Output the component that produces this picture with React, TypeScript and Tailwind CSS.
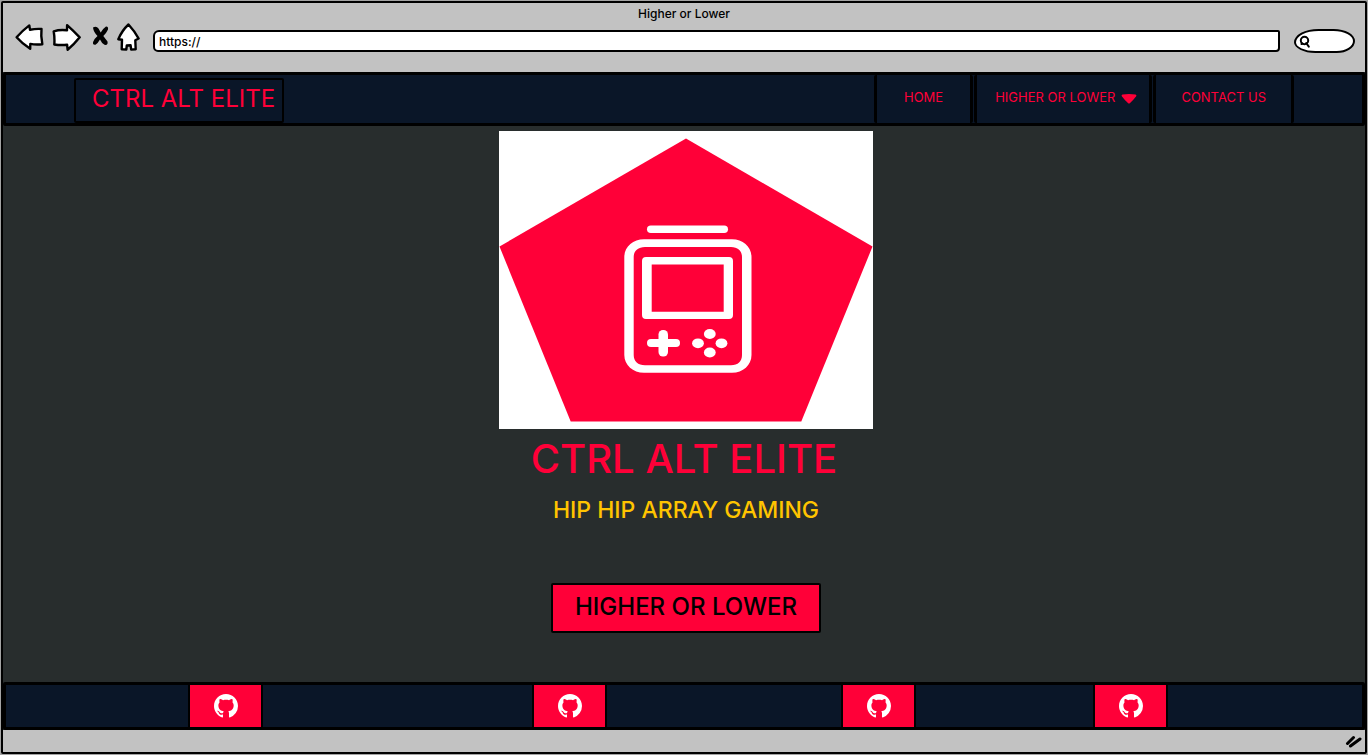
const members = [
  { name: "First team member", column: "col-start-2" },
  { name: "Second team member", column: "col-start-4" },
  { name: "Third team member", column: "col-start-6" },
  { name: "Fourth team member", column: "col-start-8" },
];

const navBox =
  "flex items-center rounded-xs border-x-3 border-black pb-1 text-[13px] leading-4 text-[#ff0038]";

function ToolbarButtons() {
  return (
    <div className="flex items-center text-black">
      <button type="button" aria-label="Back" className="mr-2">
        <svg width="29" height="28" viewBox="0 0 29 28" className="fill-white stroke-black" strokeWidth="2.4" strokeLinejoin="round" strokeLinecap="round">
          <path d="M1.6 14.3Q7 8 14.300 2.400L15 6.700Q21 5.600 26.500 6L26.300 13 27.300 21.200Q21 21.900 15.300 20.900L15.200 25.800Q7 20.500 1.600 14.300Z" />
        </svg>
      </button>
      <button type="button" aria-label="Forward" className="mr-[11px]">
        <svg width="29" height="28" viewBox="0 0 29 28" className="fill-white stroke-black" strokeWidth="2.4" strokeLinejoin="round" strokeLinecap="round">
          <path d="M1.700 8.300Q8 6.300 15 7.300L15.100 2.200Q21.500 8 27.700 14.300 22 21.500 15.600 26.700L15.100 21.700Q9 22.500 2.300 21.500Q2.800 15 1.700 8.300Z" />
        </svg>
      </button>
      <button type="button" aria-label="Stop" className="mr-2">
        <svg width="17" height="28" viewBox="0 0 17 28" className="fill-black">
          <path d="M1 4.500Q4.500 2.800 6.500 5.500L8.700 9.500Q11 5.500 14 3.500 16.500 3.300 16 6.500 14.500 10 11.300 13L15.500 18.500Q16.300 22.500 12.500 21.800 9.500 20 8 16.500 6 20 3.500 21.800 .2 22.300 1.200 18.800 2.500 15.500 5.500 13 1.500 9 1 4.500Z" />
        </svg>
      </button>
      <button type="button" aria-label="Home">
        <svg width="23" height="28" viewBox="0 0 23 28" className="fill-white stroke-black" strokeWidth="2.4" strokeLinejoin="round" strokeLinecap="round">
          <path d="M11.500 1.500Q17.500 8 21.600 15.500L18.300 17.200 18.700 26.300 14.200 26.600 13.600 22.300 9.800 22.500 9.300 26.600 4.700 26.300 5 16.700 1.300 16.200Q5 7.500 11.500 1.500Z" />
        </svg>
      </button>
    </div>
  );
}

function BrowserBar() {
  return (
    <header className="bg-[#c2c2c2] pb-[19px]">
      <div className="pt-[3px] text-center text-[12px] leading-4 font-medium text-black">Higher or Lower</div>
      <div className="-mt-px flex items-center pr-[10px] pl-3">
        <ToolbarButtons />
        <input
          type="text"
          aria-label="Address"
          defaultValue="https://"
          className="mt-2 ml-[13px] h-[22px] min-w-0 flex-1 rounded-[6px_2px_4px_5px] border-2 border-black bg-white px-1 text-[12px] font-medium text-black outline-none"
        />
        <label className="mt-2 ml-[14px] flex h-[24px] w-[61px] items-center rounded-[40%_35%_30%_35%/55%_50%_50%_45%] border-2 border-black bg-white pl-[3px]">
          <svg width="12" height="13" viewBox="0 0 12 13" className="shrink-0 fill-none stroke-black" strokeWidth="2" strokeLinecap="round">
            <circle cx="5.500" cy="5.500" r="3.700" />
            <path d="M7.200 8 9.800 11.600M2.500 9 3.500 8.500" />
          </svg>
          <input type="search" aria-label="Search" className="w-8 bg-transparent text-[12px] outline-none" />
        </label>
      </div>
    </header>
  );
}

function Navigation() {
  return (
    <nav className="flex h-[54px] items-stretch rounded-xs border-3 border-black bg-[#0a1628] px-[68px]">
      <a
        href="#home"
        className="mt-[3px] flex items-center rounded-xs border-2 border-black pr-[7px] pb-[3px] pl-4 text-[24px] leading-none whitespace-nowrap text-[#ff0038]"
      >
        CTRL ALT ELITE
      </a>
      <div className="ml-auto flex items-stretch gap-px whitespace-nowrap">
        <a href="#home" className={`${navBox} px-[27px]`}>HOME</a>
        <button type="button" aria-haspopup="menu" className={`${navBox} gap-[6px] pr-3 pl-[18px]`}>
          HIGHER OR LOWER
          <svg width="16" height="10" viewBox="0 0 16 10" className="mt-1 fill-[#ff0038]">
            <path d="M1.500.500Q8-.3 14.500.500 16 1 15 2.500 12 6.500 8.800 9.300 8 9.800 7.200 9.300 4 6.500 1 2.500 0 1 1.500.500Z" />
          </svg>
        </button>
        <a href="#contact" className={`${navBox} px-[25px]`}>CONTACT US</a>
      </div>
    </nav>
  );
}

function Logo() {
  return (
    <svg role="img" aria-label="Ctrl Alt Elite logo" width="374" height="298" viewBox="0 0 374 298" className="bg-white">
      <path d="M187 7.500 373.500 115.500 302.300 290.500H71.700L.5 115.500Z" fill="#ff0038" />
      <g fill="#fff">
        <rect x="148" y="94.500" width="81" height="7.500" rx="3.800" />
        <path fillRule="evenodd" d="M145 108.300H233C244 108.300 252.500 116 252.500 126V224C252.500 234 244 241.800 233 241.800H145C134 241.800 125.300 234 125.300 224V126C125.300 116 134 108.300 145 108.300ZM146 116C139 116 134.700 120 134.700 126V224C134.700 230.500 139 234.300 146 234.300H232C239 234.300 243 230.500 243 224V126C243 120 239 116 232 116Z" />
        <path fillRule="evenodd" d="M147 126H230Q234 126 234 130V184Q234 188 230 188H147Q143 188 143 184V130Q143 126 147 126ZM152.700 133.500V180.700H224.700V133.500Z" />
        <rect x="148" y="208" width="33" height="8" rx="4" />
        <rect x="159.500" y="199" width="9.500" height="26.500" rx="4.500" />
        <ellipse cx="210.800" cy="203" rx="5.900" ry="4.900" />
        <ellipse cx="210.800" cy="221.500" rx="5.900" ry="4.900" />
        <ellipse cx="199" cy="212.300" rx="5.900" ry="4.900" />
        <ellipse cx="222.500" cy="212.300" rx="5.900" ry="4.900" />
      </g>
    </svg>
  );
}

function GithubMark() {
  return (
    <svg width="24" height="24" viewBox="0 0 16 16" className="fill-white">
      <path d="M8 0C3.58 0 0 3.58 0 8c0 3.54 2.29 6.53 5.47 7.59.4.07.55-.17.55-.38 0-.19-.01-.82-.01-1.49-2.01.37-2.53-.49-2.69-.94-.09-.23-.48-.94-.82-1.13-.28-.15-.68-.52-.01-.53.63-.01 1.08.58 1.23.82.72 1.21 1.87.87 2.33.66.07-.52.28-.87.51-1.07-1.78-.2-3.64-.89-3.64-3.95 0-.87.31-1.59.82-2.15-.08-.2-.36-1.02.08-2.12 0 0 .67-.21 2.2.82.64-.18 1.32-.27 2-.27s1.36.09 2 .27c1.53-1.04 2.2-.82 2.2-.82.44 1.1.16 1.92.08 2.12.51.56.82 1.27.82 2.15 0 3.07-1.87 3.75-3.65 3.95.29.25.54.73.54 1.48 0 1.07-.01 1.93-.01 2.2 0 .21.15.46.55.38A8.01 8.01 0 0 0 16 8c0-4.42-3.58-8-8-8z" />
    </svg>
  );
}

export default function App() {
  return (
    <div className="flex min-h-screen flex-col bg-[#a3a3a3] p-px font-['Inter','Liberation_Sans',sans-serif]">
      <div className="flex flex-1 flex-col rounded-xs border-2 border-black bg-[#282d2d]">
        <BrowserBar />
        <Navigation />
        <main className="flex flex-1 flex-col items-center pt-[5px] pl-1">
          <Logo />
          <h1 className="mt-[7px] pr-1 text-[40px] leading-[46px] font-medium text-[#ff0038]">CTRL ALT ELITE</h1>
          <p className="mt-3 text-[23px] leading-8 font-medium text-[#ffc400]">HIP HIP ARRAY GAMING</p>
          <button
            type="button"
            className="mt-[57px] h-[50px] rounded-xs border-2 border-black bg-[#ff0038] px-[22px] pb-[3px] text-[24px] leading-none font-medium text-black"
          >
            HIGHER OR LOWER
          </button>
        </main>
        <footer className="grid h-12 grid-cols-[182fr_75px_269fr_75px_234fr_75px_177fr_75px_194fr] rounded-xs border-3 border-black bg-[#0a1628]">
          {members.map((member) => (
            <a
              key={member.name}
              href="https://github.com"
              aria-label={`${member.name} on GitHub`}
              className={`${member.column} flex items-center justify-center border-x-2 border-black bg-[#ff0038]`}
            >
              <GithubMark />
            </a>
          ))}
        </footer>
        <div className="flex h-[22px] items-center justify-end bg-[#c2c2c2] pr-[3px]">
          <svg width="17" height="14" viewBox="0 0 17 14" className="fill-none stroke-black" strokeWidth="3" strokeLinecap="round">
            <path d="M2.500 9.500 8.500 3.500M5.500 12 15 5" />
          </svg>
        </div>
      </div>
    </div>
  );
}
